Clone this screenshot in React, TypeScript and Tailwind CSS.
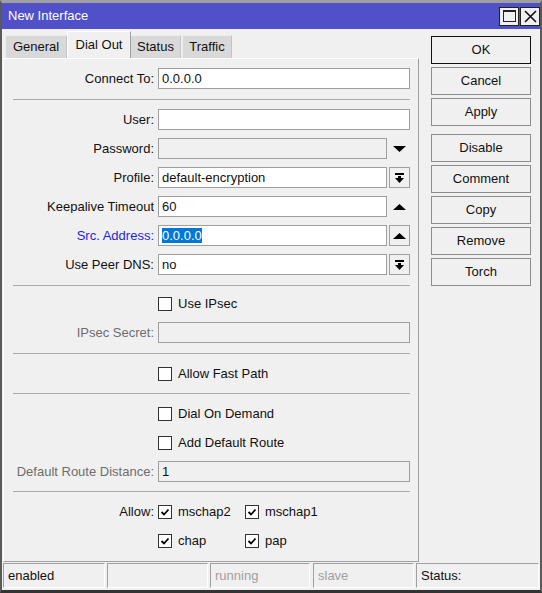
import React from "react";

const labelCls = "w-[150px] shrink-0 text-right text-[13px] leading-none whitespace-nowrap overflow-hidden";

const DownTri = () => (
  <svg width="13" height="6" viewBox="0 0 13 6">
    <polygon points="0,0 13,0 6.5,6" fill="#000" />
  </svg>
);

const UpTri = () => (
  <svg width="13" height="6" viewBox="0 0 13 6">
    <polygon points="0,6 13,6 6.5,0" fill="#000" />
  </svg>
);

const BarDown = () => (
  <svg width="9" height="10" viewBox="0 0 9 10">
    <rect x="0" y="0" width="9" height="2" fill="#000" />
    <rect x="3" y="3" width="3" height="2" fill="#000" />
    <polygon points="0,5 9,5 4.5,10" fill="#000" />
  </svg>
);

const Check = () => (
  <svg width="10" height="10" viewBox="0 0 10 10">
    <path d="M1.5 5 L4 7.5 L8.5 2.5" stroke="#000" strokeWidth="1.8" fill="none" />
  </svg>
);

const Box = ({ checked }: { checked?: boolean }) => (
  <div className="w-[14px] h-[14px] shrink-0 border border-[#333] bg-white flex items-center justify-center">
    {checked && <Check />}
  </div>
);

const Field = ({
  label,
  value,
  labelClass = "text-[#111]",
  disabled,
  trail,
  selected,
}: {
  label: string;
  value?: string;
  labelClass?: string;
  disabled?: boolean;
  trail?: "down" | "up" | "upbtn" | "bardown";
  selected?: boolean;
}) => (
  <div className="flex h-[29px] items-center">
    <div className={`${labelCls} ${labelClass}`}>{label}</div>
    <div
      className={`ml-[4px] h-[21px] border border-[#9e9e9e] pl-[3px] flex items-center text-[13px] text-[#111] ${
        disabled ? "bg-[#f0f0f0]" : "bg-white"
      } ${trail ? "w-[229px]" : "w-[252px]"}`}
    >
      {selected ? (
        <span className="bg-[#0078d7] text-white leading-[15px]">{value}</span>
      ) : (
        value
      )}
    </div>
    {trail === "down" && (
      <div className="ml-[2px] w-[21px] flex justify-center">
        <DownTri />
      </div>
    )}
    {trail === "up" && (
      <div className="ml-[2px] w-[21px] flex justify-center">
        <UpTri />
      </div>
    )}
    {trail === "upbtn" && (
      <div className="ml-[2px] w-[21px] h-[21px] border border-[#a0a0a0] bg-[#f0f0f0] flex items-center justify-center">
        <UpTri />
      </div>
    )}
    {trail === "bardown" && (
      <div className="ml-[2px] w-[21px] h-[21px] border border-[#a0a0a0] bg-[#f0f0f0] flex items-center justify-center">
        <BarDown />
      </div>
    )}
  </div>
);

const CheckRow = ({ text, h = "h-[29px]", mt = "" }: { text: string; h?: string; mt?: string }) => (
  <div className={`flex items-center ${h} ${mt}`}>
    <div className="w-[154px] shrink-0" />
    <Box />
    <span className="ml-[6px] text-[13px] text-[#111]">{text}</span>
  </div>
);

const Sep = ({ mt }: { mt: string }) => <div className={`${mt} ml-[9px] mr-[8px] h-px bg-[#ababab]`} />;

const buttons = ["OK", "Cancel", "Apply", "Disable", "Comment", "Copy", "Remove", "Torch"];

export default function App() {
  return (
    <div className="w-[542px] h-[593px] bg-[#f0f0f0] border-t-[3px] border-t-[#a0a0a0] border-x-2 border-x-[#5a5a5a] border-b-[3px] border-b-[#333] flex flex-col font-['Liberation_Sans',Arial,sans-serif] overflow-hidden">
      {/* title bar */}
      <div className="h-[26px] shrink-0 bg-[#5050c8] flex items-center pl-[6px]">
        <span className="text-white text-[13px]">New Interface</span>
        <div className="ml-auto flex gap-[1px]">
          <div className="w-[20px] h-[19px] border border-[#222] bg-[#f0f0f0] flex items-center justify-center">
            <div className="w-[13px] h-[12px] border border-[#222] border-t-2" />
          </div>
          <div className="w-[20px] h-[19px] border border-[#222] bg-[#f0f0f0] flex items-center justify-center">
            <svg width="13" height="13" viewBox="0 0 13 13">
              <path d="M1 1 L12 12 M12 1 L1 12" stroke="#111" strokeWidth="1.6" />
            </svg>
          </div>
        </div>
      </div>

      <div className="flex flex-1">
        {/* left column */}
        <div className="ml-[1px] mt-[2px] flex flex-col">
          <div className="h-[27px] flex items-end text-[13px] text-[#111]">
            <div className="ml-[2px] w-[62px] h-[23px] bg-[#d9d9d9] border-t border-l border-[#ececec] border-r border-r-[#c4c4c4] flex items-center justify-center">
              General
            </div>
            <div className="w-[64px] h-[27px] bg-[#f0f0f0] border-t border-l border-white border-r border-r-[#a0a0a0] flex items-center justify-center pb-[1px]">
              Dial Out
            </div>
            <div className="w-[50px] h-[23px] bg-[#d9d9d9] border-t border-[#ececec] border-r border-r-[#c4c4c4] flex items-center justify-center">
              Status
            </div>
            <div className="ml-[1px] w-[50px] h-[23px] bg-[#d9d9d9] border-t border-l border-[#ececec] border-r border-r-[#c4c4c4] flex items-center justify-center">
              Traffic
            </div>
          </div>
          <div className="w-[416px] h-[504px] border-t border-l border-white border-r border-b border-r-[#a0a0a0] border-b-[#a0a0a0] flex flex-col pt-[5px]">
            <Field label="Connect To:" value="0.0.0.0" />
            <Sep mt="mt-[6px]" />
            <div className="mt-[5px]">
              <Field label="User:" value="" />
              <Field label="Password:" value="" disabled trail="down" />
              <Field label="Profile:" value="default-encryption" trail="bardown" />
              <Field label="Keepalive Timeout" value="60" trail="up" />
              <Field label="Src. Address:" value="0.0.0.0" labelClass="text-[#1f1fe0]" trail="upbtn" selected />
              <Field label="Use Peer DNS:" value="no" trail="bardown" />
            </div>
            <Sep mt="mt-[6px]" />
            <CheckRow text="Use IPsec" h="h-[28px]" mt="mt-[4px]" />
            <Field label="IPsec Secret:" value="" labelClass="text-[#6d6d6d]" disabled />
            <Sep mt="mt-[6px]" />
            <CheckRow text="Allow Fast Path" mt="mt-[5px]" />
            <Sep mt="mt-[5px]" />
            <CheckRow text="Dial On Demand" mt="mt-[5px]" />
            <CheckRow text="Add Default Route" />
            <Field label="Default Route Distance:" value="1" labelClass="text-[#6d6d6d]" disabled />
            <Sep mt="mt-[5px]" />
            <div className="mt-[5px] flex items-center h-[29px] text-[13px] text-[#111]">
              <div className={labelCls}>Allow:</div>
              <div className="ml-[4px] w-[87px] flex items-center">
                <Box checked />
                <span className="ml-[6px]">mschap2</span>
              </div>
              <Box checked />
              <span className="ml-[6px]">mschap1</span>
            </div>
            <div className="flex items-center h-[29px] text-[13px] text-[#111]">
              <div className="w-[154px] shrink-0" />
              <div className="w-[87px] flex items-center">
                <Box checked />
                <span className="ml-[6px]">chap</span>
              </div>
              <Box checked />
              <span className="ml-[6px]">pap</span>
            </div>
          </div>
        </div>

        {/* right buttons */}
        <div className="ml-[12px] mt-[7px] flex flex-col gap-[3px]">
          {buttons.map((b, i) => (
            <div
              key={b}
              className={`w-[100px] h-[28px] bg-[#f0f0f0] flex items-center justify-center text-[13px] text-[#111] border ${
                i === 0 ? "border-[#111]" : "border-[#8c8c8c]"
              } ${i === 3 ? "mt-[5px]" : ""}`}
            >
              {b}
            </div>
          ))}
        </div>
      </div>

      {/* status bar */}
      <div className="mt-[1px] mb-[2px] ml-[1px] h-[25px] flex text-[13px]">
        <div className="w-[102px] border-t border-l border-[#a0a0a0] border-r border-b border-r-white border-b-white pl-[4px] flex items-center text-[#111]">
          enabled
        </div>
        <div className="ml-[2px] w-[101px] border-t border-l border-[#a0a0a0] border-r border-b border-r-white border-b-white" />
        <div className="ml-[2px] w-[100px] border-t border-l border-[#a0a0a0] border-r border-b border-r-white border-b-white pl-[4px] flex items-center text-[#a0a0a0]">
          running
        </div>
        <div className="ml-[3px] w-[101px] border-t border-l border-[#a0a0a0] border-r border-b border-r-white border-b-white pl-[4px] flex items-center text-[#a0a0a0]">
          slave
        </div>
        <div className="ml-[2px] w-[123px] border-t border-l border-[#a0a0a0] border-r border-b border-r-white border-b-white pl-[4px] flex items-center text-[#111]">
          Status:
        </div>
      </div>
    </div>
  );
}
